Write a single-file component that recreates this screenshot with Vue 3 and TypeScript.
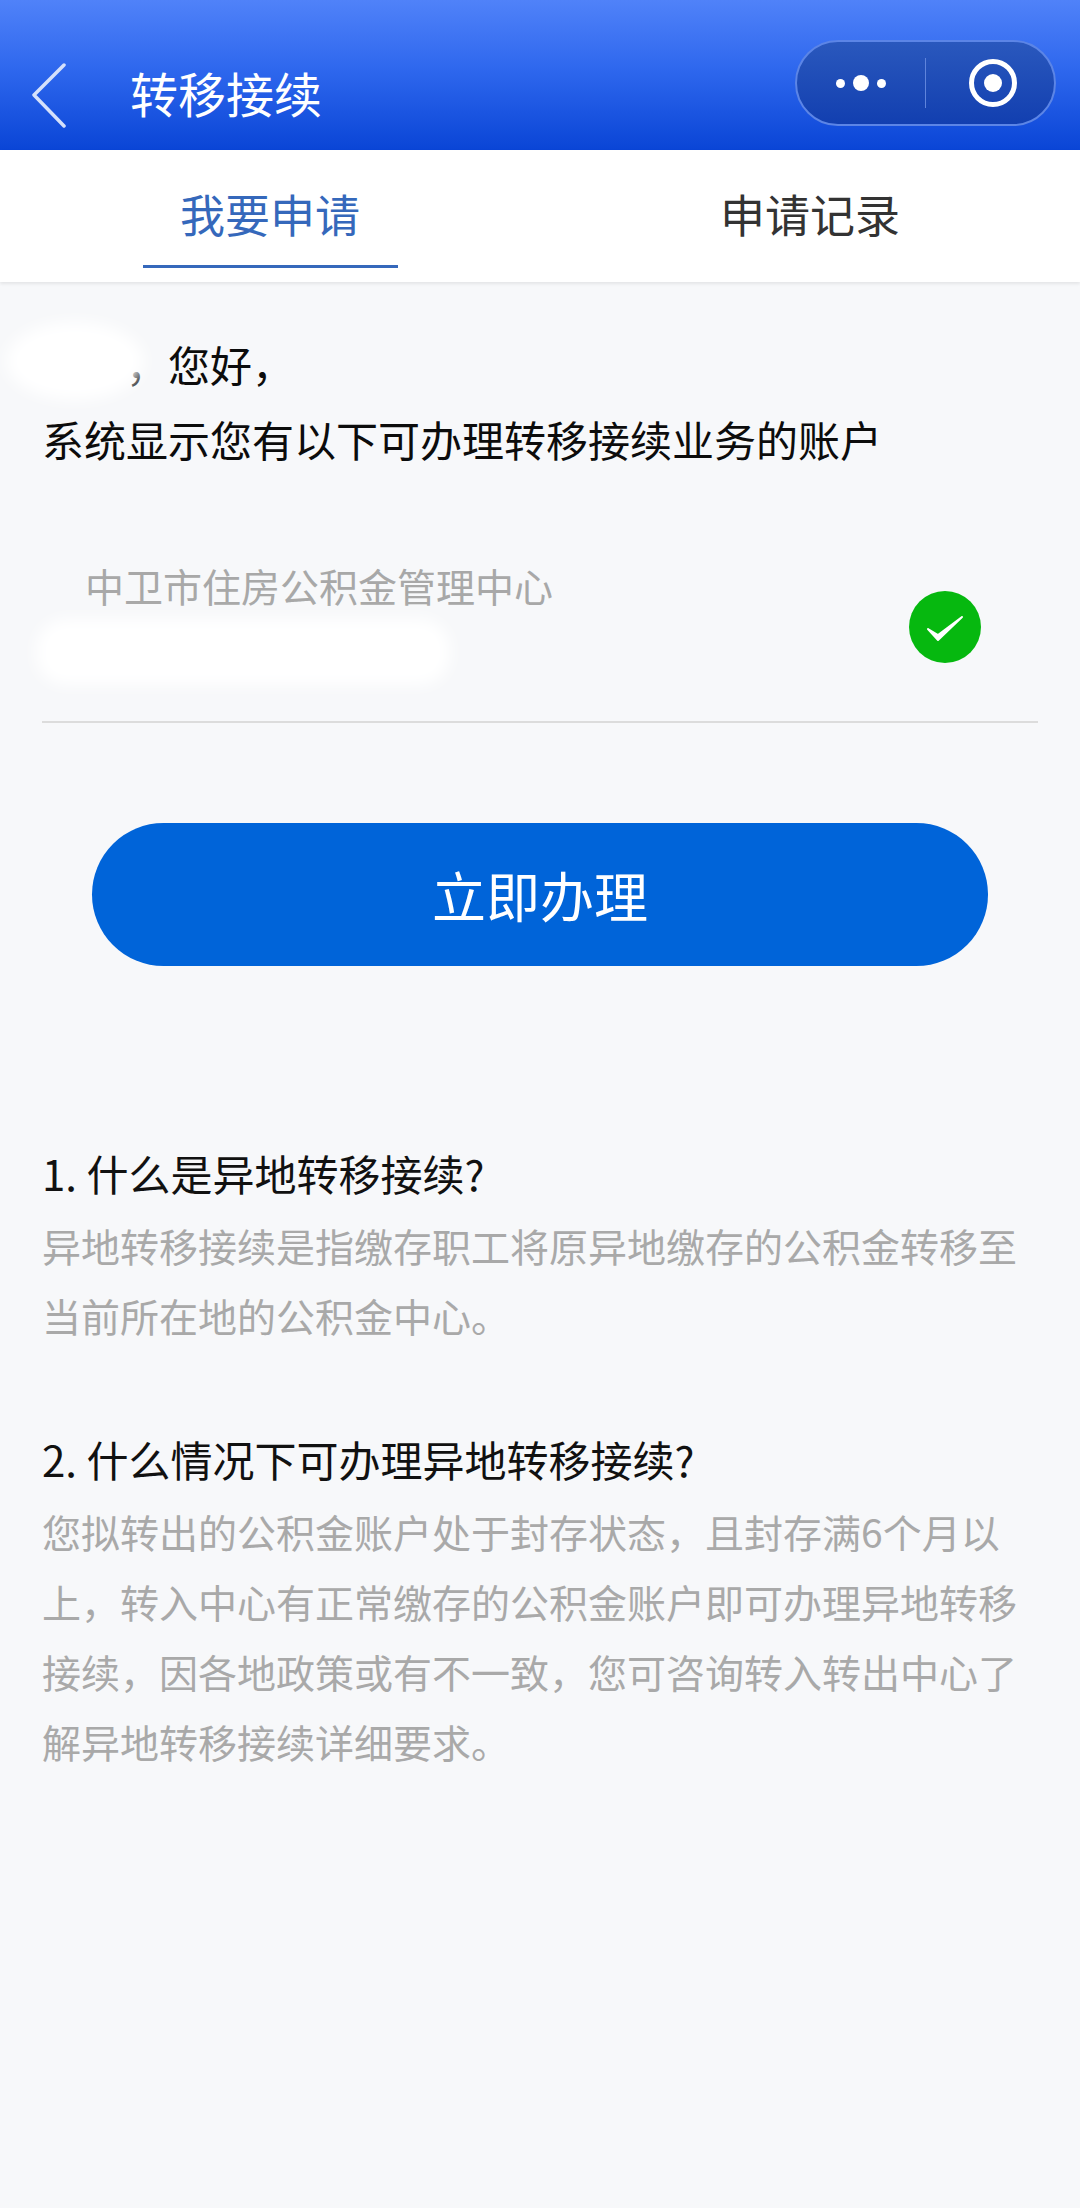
<script setup lang="ts">
const faqs = [
  {
    q: "1. 什么是异地转移接续?",
    a: "异地转移接续是指缴存职工将原异地缴存的公积金转移至当前所在地的公积金中心。",
  },
  {
    q: "2. 什么情况下可办理异地转移接续?",
    a: "您拟转出的公积金账户处于封存状态，且封存满6个月以上，转入中心有正常缴存的公积金账户即可办理异地转移接续，因各地政策或有不一致，您可咨询转入转出中心了解异地转移接续详细要求。",
  },
];
</script>

<template>
  <div class="page">
    <header class="nav">
      <svg class="back" width="40" height="66" viewBox="0 0 40 66">
        <path d="M34 3 L4 33 L34 64" fill="none" stroke="#d5e1fb" stroke-width="3.5" stroke-linecap="round" stroke-linejoin="round" />
      </svg>
      <h1 class="title">转移接续</h1>
      <div class="capsule">
        <div class="dots">
          <i class="dot"></i><i class="dot big"></i><i class="dot"></i>
        </div>
        <span class="sep"></span>
        <div class="target"><i></i></div>
      </div>
    </header>

    <nav class="tabs">
      <div class="tab active"><span>我要申请</span></div>
      <div class="tab"><span>申请记录</span></div>
    </nav>

    <main class="content">
      <section class="greet">
        <span class="blob name"></span>
        <p class="hello">，您好，</p>
        <p>系统显示您有以下可办理转移接续业务的账户</p>
      </section>

      <section class="account">
        <div class="info">
          <p class="org">中卫市住房公积金管理中心</p>
          <span class="blob acct"></span>
        </div>
        <svg class="check" width="72" height="72" viewBox="0 0 72 72">
          <circle cx="36" cy="36" r="36" fill="#06b80f" />
          <path d="M19 38 L29 49 L53 26 L29 44 Z" fill="#fff" stroke="#fff" stroke-width="2" stroke-linejoin="round" />
        </svg>
      </section>

      <button class="submit">立即办理</button>

      <section class="faq">
        <div v-for="item in faqs" :key="item.q" class="faq-item">
          <h2>{{ item.q }}</h2>
          <p>{{ item.a }}</p>
        </div>
      </section>
    </main>
  </div>
</template>

<style>
html, body {
  margin: 0;
  background: #f7f8fa;
}
</style>

<style scoped>
.page {
  width: 1080px;
  height: 2208px;
  overflow: hidden;
  background: #f7f8fa;
  font-family: "Noto Sans CJK SC", "Noto Sans", sans-serif;
}
p, h1, h2 {
  margin: 0;
  font-weight: 400;
}
.nav {
  height: 150px;
  box-sizing: border-box;
  display: flex;
  align-items: flex-start;
  background: linear-gradient(180deg, #5082f9 0%, #2f68ee 45%, #0a45d6 100%);
  color: #fff;
}
.back {
  margin: 62px 0 0 30px;
}
.title {
  margin: 58px 0 0 60px;
  font-size: 48px;
  line-height: 68px;
}
.capsule {
  margin: 40px 24px 0 auto;
  width: 261px;
  height: 86px;
  box-sizing: border-box;
  border: 2px solid #5c85e6;
  border-radius: 43px;
  background: linear-gradient(180deg, #2a58bd, #123fb0);
  display: flex;
  align-items: center;
}
.dots {
  width: 127px;
  display: flex;
  align-items: center;
  justify-content: center;
  gap: 8px;
}
.dot {
  width: 9px;
  height: 9px;
  border-radius: 50%;
  background: #fff;
}
.dot.big {
  width: 16px;
  height: 16px;
}
.sep {
  margin-left: 1px;
  width: 1px;
  height: 50px;
  background: #5f84dc;
}
.target {
  flex: 1;
  display: flex;
  justify-content: center;
  padding-left: 6px;
}
.target i {
  display: flex;
  width: 48px;
  height: 48px;
  box-sizing: border-box;
  border: 5px solid #fff;
  border-radius: 50%;
  align-items: center;
  justify-content: center;
}
.target i::after {
  content: "";
  width: 18px;
  height: 18px;
  border-radius: 50%;
  background: #fff;
}
.tabs {
  height: 132px;
  background: #fff;
  display: flex;
  box-shadow: 0 2px 3px rgba(0, 0, 0, 0.08);
  position: relative;
}
.tab {
  width: 540px;
  display: flex;
  justify-content: center;
  box-sizing: border-box;
  padding-top: 33px;
  font-size: 45px;
  line-height: 62px;
  color: #333;
}
.tab span {
  display: block;
  height: 82px;
}
.tab.active {
  color: #3568bb;
}
.tab.active span {
  width: 255px;
  text-align: center;
  border-bottom: 3px solid #3568bb;
}
.content {
  padding: 44px 42px 0;
}
.greet {
  position: relative;
  font-size: 42px;
  line-height: 75px;
  color: #0c0c0c;
}
.hello {
  padding-left: 84px;
}
.blob {
  position: absolute;
  background: #fff;
  filter: blur(8px);
  border-radius: 50%;
}
.name {
  left: -36px;
  top: -4px;
  width: 138px;
  height: 78px;
}
.account {
  margin-top: 63px;
  height: 184px;
  border-bottom: 2px solid #dcdcdc;
  display: flex;
  box-sizing: border-box;
}
.info {
  position: relative;
  flex: 1;
  padding: 19px 0 0 43px;
}
.org {
  font-size: 39px;
  line-height: 54px;
  color: #a8a8a8;
}
.acct {
  left: -6px;
  top: 80px;
  width: 414px;
  height: 66px;
  border-radius: 30px;
}
.check {
  margin: 52px 57px 0 0;
}
.submit {
  display: block;
  margin: 100px 0 0 50px;
  width: 896px;
  height: 143px;
  border: 0;
  border-radius: 72px;
  background: #0064d9;
  color: #fff;
  font-family: inherit;
  font-size: 54px;
}
.faq {
  margin-top: 172px;
}
.faq-item + .faq-item {
  margin-top: 74px;
}
.faq-item h2 {
  font-size: 42px;
  line-height: 70px;
  color: #111;
}
.faq-item p {
  font-size: 39px;
  line-height: 70px;
  color: #a9a9a9;
  padding-top: 2px;
}
</style>
